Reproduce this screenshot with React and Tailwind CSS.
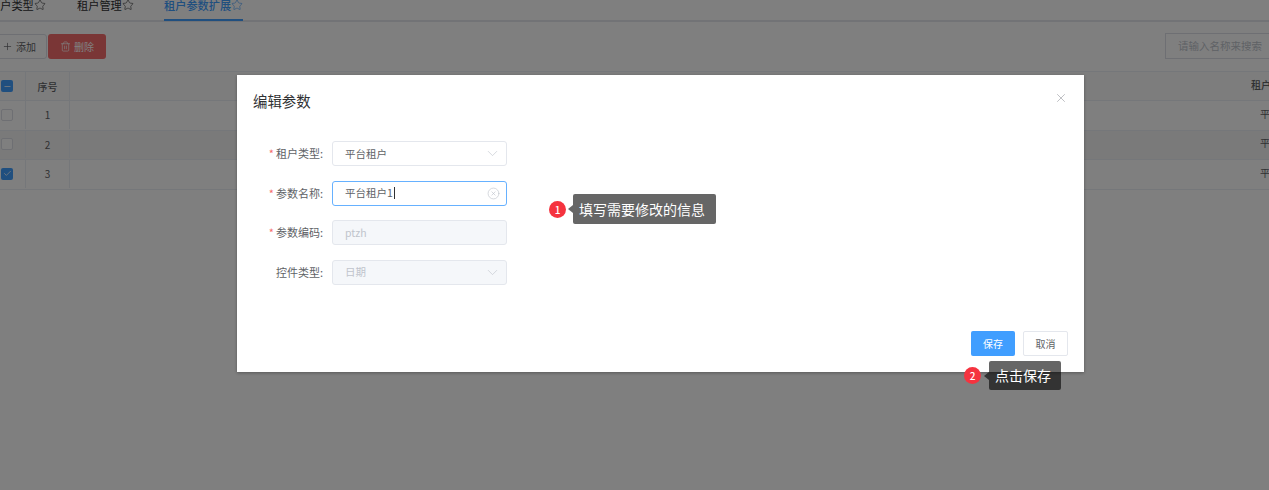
import React from "react";
import { ChevronDown, Plus, Trash2, X, Star, Minus, Check, CircleX } from "lucide-react";

const rows = [
  { n: 1, checked: false, stripe: false },
  { n: 2, checked: false, stripe: true },
  { n: 3, checked: true, stripe: false },
];

function Tab({ label, active, cls }) {
  return (
    <div className={`flex h-[24px] items-center border-b-2 pb-[6px] text-[11.2px] ${active ? "border-[#409eff] font-medium text-[#409eff]" : "border-transparent text-[#303133]"} ${cls}`}>
      <span>{label}</span>
      <Star size={12} strokeWidth={1.2} />
    </div>
  );
}

function Field({ label, required, children }) {
  return (
    <div className="mb-[14.5px] flex h-[25px] items-center">
      <div className="w-[95px] pr-[9px] text-right text-[11px] text-[#606266]">
        {required && <span className="mr-[2px] text-[#f56c6c]">*</span>}
        {label}
      </div>
      {children}
    </div>
  );
}

function Input({ value, disabled, focused, icon, caret }) {
  return (
    <div className={`flex h-[25px] w-[175px] items-center justify-between rounded-[3px] border pl-[12px] pr-[6px] text-[10.5px] ${focused ? "border-[#66b1ff]" : "border-[#e4e7ed]"} ${disabled ? "bg-[#f5f7fa] text-[#c0c4cc]" : "bg-white text-[#606266]"}`}>
      <span className="flex items-center">
        {value}
        {caret && <span className="ml-px h-[12px] w-px bg-[#303133]" />}
      </span>
      {icon}
    </div>
  );
}

function Note({ n, text, cls, boxCls, gapCls }) {
  return (
    <div className={`absolute flex items-center ${cls}`}>
      <div className="flex h-[17px] w-[17px] items-center justify-center rounded-full bg-[#f5333f] text-[10px] font-medium text-white">{n}</div>
      <div className={`h-0 w-0 border-y-[4px] border-r-[5px] border-y-transparent border-r-black/60 ${gapCls}`} />
      <div className={`flex items-center rounded-[2px] bg-black/60 text-white ${boxCls}`}>{text}</div>
    </div>
  );
}

export default function App() {
  return (
    <div className="relative h-[490px] w-[1269px] overflow-hidden bg-white font-['Noto_Sans_CJK_SC','Liberation_Sans',sans-serif]">
      {/* page under the mask */}
      <div className="-mt-[3px]">
        <div className="-ml-[11px] flex h-[25px] border-b-2 border-[#e4e7ed]">
          <Tab label="租户类型" cls="w-[88px]" />
          <Tab label="租户管理" cls="w-[87px]" />
          <Tab label="租户参数扩展" active cls="" />
        </div>
        <div className="mt-[11px] flex h-[26px] items-center justify-between">
          <div className="flex">
            <div className="-ml-[10px] flex h-[25px] w-[57px] items-center justify-center gap-[3px] rounded-[3px] border border-[#dcdfe6] bg-white pl-[1px] text-[10px] text-[#606266]">
              <Plus size={11} strokeWidth={1.5} />
              添加
            </div>
            <div className="ml-px flex h-[25px] w-[58px] items-center justify-center gap-[3px] rounded-[3px] bg-[#f56c6c] text-[10px] text-white">
              <Trash2 size={11} strokeWidth={1.5} />
              删除
            </div>
          </div>
          <div className="-mr-[20px] flex h-[26px] w-[124px] items-center border border-[#dcdfe6] bg-white pl-[12px] text-[10.5px] text-[#c0c4cc]">
            请输入名称来搜索
          </div>
        </div>
        <div className="mt-[12px] border-t border-[#ebeef5] text-[10px] text-[#606266]">
          <div className="flex h-[29px] items-center border-b border-[#ebeef5] bg-[#fafafa] font-medium">
            <div className="flex h-full w-[26px] items-center border-r border-[#ebeef5] pl-[1px]">
              <div className="flex h-[12px] w-[12px] items-center justify-center rounded-[2px] bg-[#409eff] text-white">
                <Minus size={9} strokeWidth={2} />
              </div>
            </div>
            <div className="flex h-full w-[44px] items-center justify-center border-r border-[#ebeef5]">序号</div>
            <div className="flex-1 text-right"><span className="-mr-[15px] inline-block w-[33px] overflow-hidden whitespace-nowrap text-left">租户类型</span></div>
          </div>
          {rows.map((r) => (
            <div key={r.n} className={`flex h-[29.5px] items-center border-b border-[#ebeef5] pb-[1px] ${r.stripe ? "bg-[#f5f5f5]" : "bg-white"}`}>
              <div className="flex h-full w-[26px] items-center border-r border-[#ebeef5] pl-[1px]">
                {r.checked ? (
                  <div className="flex h-[12px] w-[12px] items-center justify-center rounded-[2px] bg-[#409eff] text-white">
                    <Check size={9} strokeWidth={2} />
                  </div>
                ) : (
                  <div className="h-[12px] w-[12px] rounded-[2px] border border-[#dcdfe6] bg-white" />
                )}
              </div>
              <div className="flex h-full w-[44px] items-center justify-center border-r border-[#ebeef5]">{r.n}</div>
              <div className="flex-1 text-right"><span className="-mr-[6px] inline-block w-[15px] overflow-hidden whitespace-nowrap text-left">平台</span></div>
            </div>
          ))}
        </div>
      </div>

      {/* mask */}
      <div className="absolute inset-0 bg-black/50" />

      {/* dialog */}
      <div className="absolute left-[237px] top-[75px] flex h-[297px] w-[847px] flex-col bg-white shadow-[0_1px_3px_rgba(0,0,0,0.3)]">
        <div className="flex items-start justify-between pl-[16px] pr-[16px] pt-[16px]">
          <span className="text-[14.4px] leading-[20px] text-[#303133]">编辑参数</span>
          <X size={14} strokeWidth={1} className="text-[#909399]" />
        </div>
        <div className="pt-[30px]">
          <Field label="租户类型:" required>
            <Input value="平台租户" icon={<ChevronDown size={17} strokeWidth={0.9} className="-mr-[1px] text-[#c0c4cc]" />} />
          </Field>
          <Field label="参数名称:" required>
            <Input value="平台租户1" focused caret icon={<CircleX size={13} strokeWidth={1.2} className="text-[#c0c4cc]" />} />
          </Field>
          <Field label="参数编码:" required>
            <Input value="ptzh" disabled />
          </Field>
          <Field label="控件类型:">
            <Input value="日期" disabled icon={<ChevronDown size={17} strokeWidth={0.9} className="-mr-[1px] text-[#c0c4cc]" />} />
          </Field>
        </div>
        <div className="mt-auto flex justify-end gap-[8px] pb-[16px] pr-[16px] text-[10px]">
          <div className="flex h-[25px] w-[44px] items-center justify-center rounded-[2px] bg-[#409eff] text-white">保存</div>
          <div className="flex h-[25px] w-[45px] items-center justify-center rounded-[2px] border border-[#e4e7ed] bg-white text-[#606266]">取消</div>
        </div>
      </div>

      <Note n="1" text="填写需要修改的信息" cls="left-[549px] top-[194px]" gapCls="ml-[2px]" boxCls="h-[30px] w-[143px] pl-[6px] text-[14px]" />
      <Note n="2" text="点击保存" cls="left-[964px] top-[361px]" gapCls="ml-[3px]" boxCls="h-[29px] w-[72px] pl-[6px] text-[14px]" />
    </div>
  );
}
